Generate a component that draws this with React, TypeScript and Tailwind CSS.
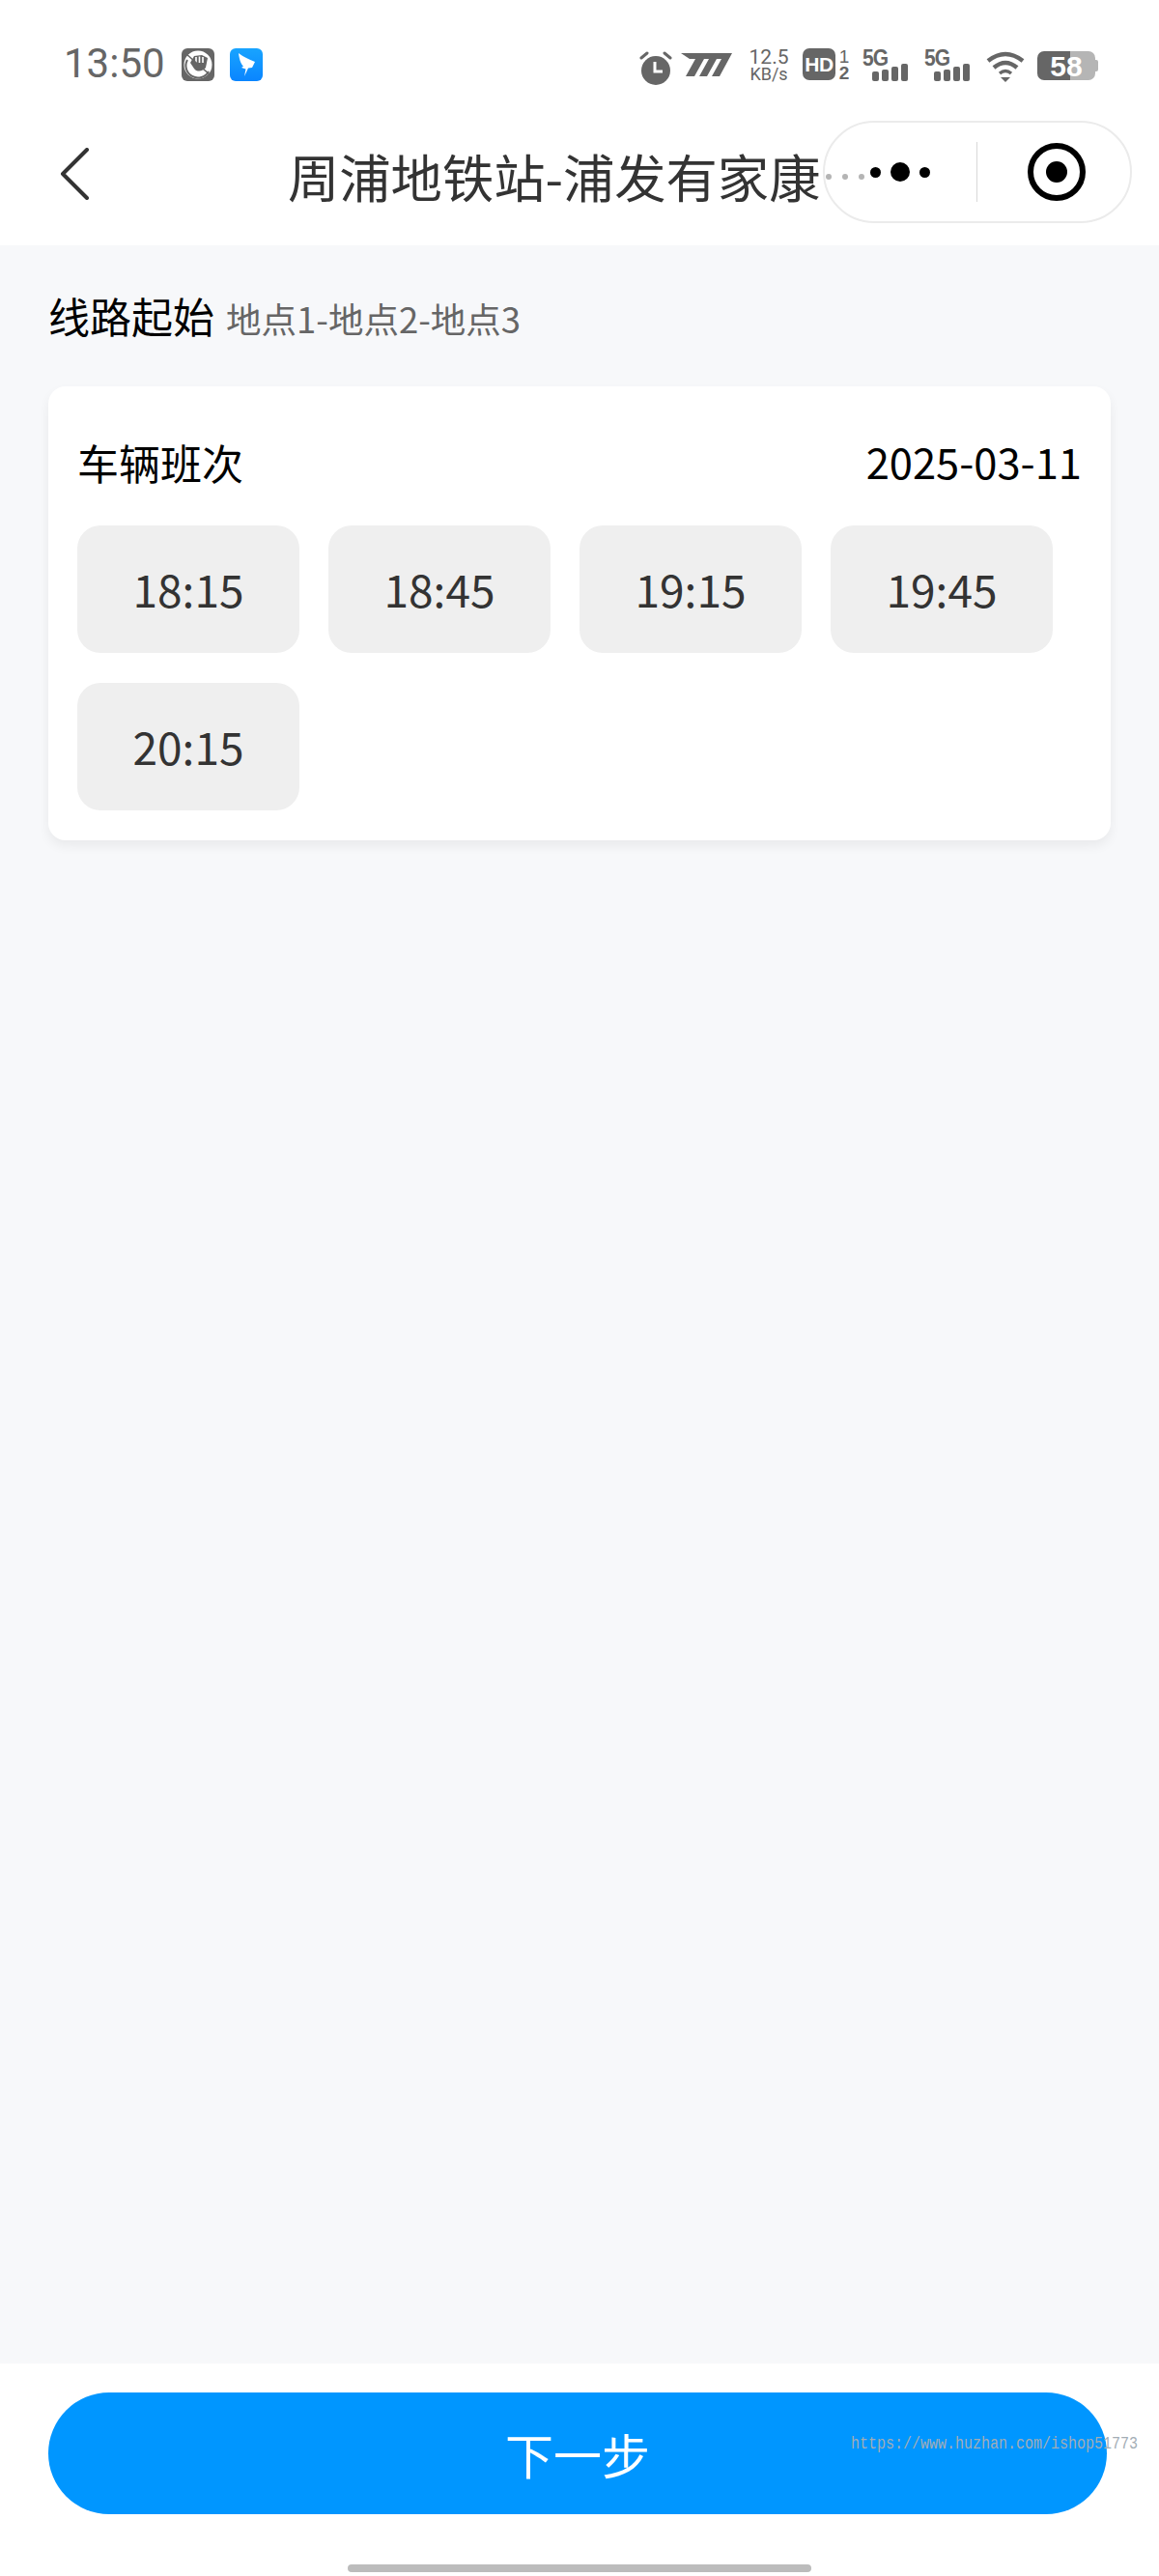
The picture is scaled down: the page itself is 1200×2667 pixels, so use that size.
const cjk = "font-['Noto_Sans_CJK_SC','Noto_Sans',sans-serif]";

const times = ["18:15", "18:45", "19:15", "19:45", "20:15"];

const AlarmIcon = () => (
  <svg width="34" height="36" viewBox="0 0 34 36" className="shrink-0">
    <circle cx="17" cy="20" r="15" fill="#666" />
    <path d="M2 7 L8 2 M32 7 L26 2" stroke="#666" strokeWidth="3" strokeLinecap="round" />
    <path d="M16 11 V21 H24" fill="none" stroke="#fff" strokeWidth="3" />
  </svg>
);

const SpeedIcon = () => (
  <svg width="53" height="24" viewBox="0 0 53 24" className="shrink-0">
    <path d="M0 0H53L40 24H32L42 6H37L27 24H19L29 6H24L14 24H5L15 6H9Z" fill="#666" />
  </svg>
);

const SignalIcon = () => (
  <div className="flex flex-col shrink-0 w-[49px] h-[33px]">
    <span className="font-['Liberation_Sans',sans-serif] font-bold text-[21px] leading-[16px] text-[#666] tracking-[-1px] scale-y-110 origin-top">5G</span>
    <div className="flex items-end gap-[3px] ml-[10px] mt-[-1px]">
      <div className="w-[7px] h-[10px] rounded-[2px] bg-[#666]" />
      <div className="w-[7px] h-[12px] rounded-[2px] bg-[#666]" />
      <div className="w-[7px] h-[15px] rounded-[2px] bg-[#666]" />
      <div className="w-[7px] h-[18px] rounded-[2px] bg-[#666]" />
    </div>
  </div>
);

const StatusBar = () => (
  <div className="h-[120px] bg-white flex items-start pt-[50px] pl-[66px]">
    <span className="font-['Roboto',sans-serif] text-[42px] leading-[32px] text-[#666]">13:50</span>
    <svg width="34" height="34" viewBox="0 0 34 34" className="ml-[17px] shrink-0">
      <rect width="34" height="34" rx="6" fill="#666" />
      <circle cx="17" cy="17" r="14.5" fill="#fff" />
      <path d="M6 12 A12 12 0 0 0 28 24" fill="none" stroke="#666" strokeWidth="2" />
      <path d="M9 15 L13 21 C16 25 22 24 25 20 L27 10 L21 7 L13 8 Z" fill="#666" />
      <path d="M15 9 V15 M18.5 8.5 V15 M22 9 V15" stroke="#fff" strokeWidth="1.6" />
      <path d="M5 6 L30 28" stroke="#666" strokeWidth="1.6" />
    </svg>
    <svg width="34" height="34" viewBox="0 0 34 34" className="ml-[16px] shrink-0">
      <defs>
        <linearGradient id="ding" x1="0" y1="0" x2="0" y2="1">
          <stop offset="0" stopColor="#18a4ff" />
          <stop offset="1" stopColor="#0a85ff" />
        </linearGradient>
      </defs>
      <rect width="34" height="34" rx="6" fill="url(#ding)" />
      <path d="M9 5 C14 9 21 12 26 14 L23 20 L19 20.5 L15 29 L16.5 21.5 L12 20 L14 18.5 C11 16 9.5 10 9 5Z" fill="#fff" />
    </svg>

    <div className="ml-auto flex items-start pr-[63px]">
      <div className="mt-[3px]"><AlarmIcon /></div>
      <div className="mt-[5px] ml-[9px]"><SpeedIcon /></div>
      <div className="ml-[18px] w-[40px] flex flex-col items-center font-['Roboto',sans-serif] text-[#666]">
        <span className="text-[21px] leading-[18px]">12.5</span>
        <span className="text-[18px] leading-[17px]">KB/s</span>
      </div>
      <div className="ml-[15px] w-[34px] h-[33px] rounded-[7px] bg-[#666] flex items-center justify-center font-['Liberation_Sans',sans-serif] font-bold text-[21px] tracking-[-0.5px] text-white">HD</div>
      <div className="ml-[3px] w-[12px] flex flex-col items-center font-['Liberation_Sans',sans-serif] font-bold text-[#666] text-[19px] leading-[17px]">
        <span className="font-normal">1</span>
        <span>2</span>
      </div>
      <div className="ml-[13px] mt-[1px]"><SignalIcon /></div>
      <div className="ml-[15px] mt-[1px]"><SignalIcon /></div>
      <svg width="40" height="32" viewBox="0 0 40 32" className="ml-[15px] mt-[3px] shrink-0">
        <path d="M2 10 Q20 -4 38 10" fill="none" stroke="#666" strokeWidth="4.5" />
        <path d="M8 17 Q20 7 32 17" fill="none" stroke="#666" strokeWidth="4.5" />
        <path d="M14 23 Q20 18 26 23" fill="none" stroke="#666" strokeWidth="3.5" />
        <path d="M15 27 H25 L20 32Z" fill="#666" />
      </svg>
      <div className="ml-[13px] mt-[3px] flex items-center">
        <div className="w-[60px] h-[30px] rounded-[7px] bg-[linear-gradient(90deg,#666_57%,#b5b5b5_57%)] flex items-center justify-center font-['Liberation_Sans',sans-serif] font-bold text-[30px] text-white">58</div>
        <div className="w-[3px] h-[12px] rounded-r-[2px] bg-[#b5b5b5]" />
      </div>
    </div>
  </div>
);

const NavBar = () => (
  <div className="h-[134px] bg-white flex items-center pl-[62px] pr-[28px] pb-[18px]">
    <svg width="30" height="54" viewBox="0 0 30 54" className="shrink-0 mt-[4px]">
      <path d="M28 2 L3 27 L28 52" fill="none" stroke="#333" strokeWidth="4" strokeLinecap="round" strokeLinejoin="round" />
    </svg>
    <span className={`${cjk} ml-[206px] mt-[7px] text-[53.3px] leading-[60px] text-[#333] whitespace-nowrap`}>周浦地铁站-浦发有家康</span>
    <div className="flex gap-[11px] ml-[6px] mr-[-20px] mt-[10px] w-[5px] shrink-0 z-10">
      <div className="w-[6px] h-[6px] rounded-full bg-[#b4b4b4] shrink-0" />
      <div className="w-[6px] h-[6px] rounded-full bg-[#b4b4b4] shrink-0" />
      <div className="w-[6px] h-[6px] rounded-full bg-[#b4b4b4] shrink-0" />
    </div>
    <div className="ml-auto w-[320px] h-[106px] shrink-0 rounded-full border-2 border-[#ebebeb] flex items-center">
      <div className="flex-1 flex items-center justify-center gap-[10px] pr-[2px]">
        <div className="w-[11px] h-[11px] rounded-full bg-black" />
        <div className="w-[20px] h-[20px] rounded-full bg-black" />
        <div className="w-[11px] h-[11px] rounded-full bg-black" />
      </div>
      <div className="w-[1px] h-[62px] bg-[#d9d9d9]" />
      <div className="w-[158px] flex items-center justify-center pl-[6px]">
        <div className="w-[60px] h-[60px] rounded-full border-[6px] border-black flex items-center justify-center">
          <div className="w-[22px] h-[22px] rounded-full bg-black" />
        </div>
      </div>
    </div>
  </div>
);

const App = () => {
  return (
    <div className={`${cjk} w-[1200px] h-[2667px] flex flex-col overflow-hidden bg-white`}>
      <StatusBar />
      <NavBar />

      <main className="flex-1 bg-[#f7f8fa] px-[50px] pt-[44px]">
        <div className="flex items-baseline h-[56px]">
          <span className="text-[43px] leading-[56px] text-black">线路起始</span>
          <span className="ml-[12px] text-[36.5px] leading-[56px] text-[#666]">地点1-地点2-地点3</span>
        </div>

        <div className="mt-[46px] w-[1100px] h-[470px] rounded-[18px] bg-white shadow-[0_6px_12px_rgba(0,0,0,0.06)] pl-[30px] pr-[30px] pt-[48px]">
          <div className="flex items-center justify-between h-[60px]">
            <span className="text-[43px] leading-[60px] text-black">车辆班次</span>
            <span className="text-[43.5px] leading-[60px] text-black">2025-03-11</span>
          </div>
          <div className="mt-[36px] flex flex-wrap gap-x-[30px] gap-y-[31px]">
            {times.map((t, i) => (
              <div
                key={i}
                className="w-[230px] h-[132px] rounded-[24px] bg-[#efefef] flex items-center justify-center pb-[2px] text-[46px] text-[#333]"
              >
                {t}
              </div>
            ))}
          </div>
        </div>
      </main>

      <footer className="relative h-[220px] bg-white pt-[30px] pl-[50px] pr-[54px]">
        <button className="w-full h-[126px] rounded-full bg-[#0096ff] flex items-center justify-center text-[50px] text-white">
          下一步
        </button>
        <div className="mx-auto mt-[52px] w-[480px] h-[8px] rounded-full bg-[#bcbcbc] translate-x-[2px]" />
        <span className="absolute left-[881px] top-[74px] font-['Liberation_Mono',monospace] text-[15px] leading-[20px] text-[#a3adb5] whitespace-nowrap scale-y-125">
          https://www.huzhan.com/ishop51773
        </span>
      </footer>
    </div>
  );
};

export default App;
